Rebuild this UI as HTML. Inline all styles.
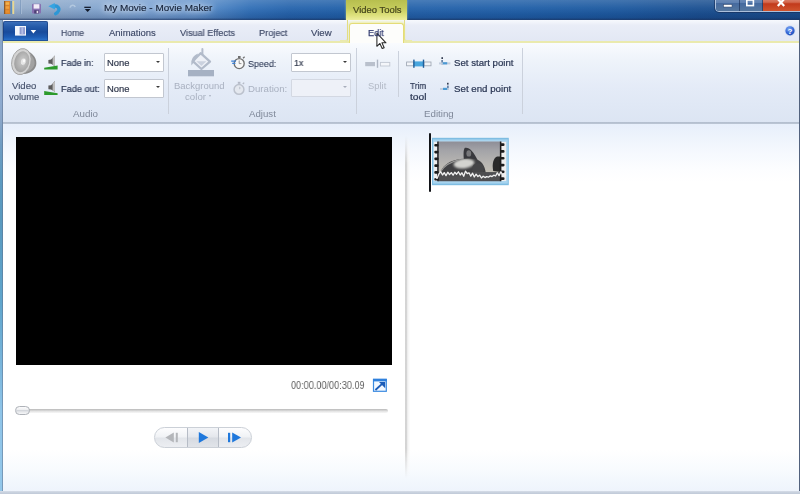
<!DOCTYPE html>
<html lang="en"><head><meta charset="utf-8"><title>My Movie - Movie Maker</title>
<style>
html,body{margin:0;padding:0;background:#fff;}
#win{position:relative;width:800px;height:494px;overflow:hidden;background:#fff;font-family:"Liberation Sans",sans-serif;}
#win div,#win svg{position:absolute;}
.t{will-change:transform;position:absolute;white-space:pre;transform-origin:0 0;display:inline-block;font-family:"Liberation Sans",sans-serif;}
/* title bar */
#title{left:0;top:0;width:800px;height:20px;
 background:
  linear-gradient(180deg,rgba(255,255,255,.16) 0,rgba(255,255,255,.04) 40%,rgba(5,25,70,.10) 70%,rgba(5,25,70,.26) 100%),
  linear-gradient(90deg,#98aec9 0,#8faacb 50px,#84a6cf 100px,#79a1d2 150px,#6493cb 195px,#4a82c2 222px,#3270b7 250px,#2765ad 290px,#2362aa 340px,#2563ab 420px,#2160a8 520px,#1e5aa0 620px,#1c5192 700px,#1b4c8a 800px);}
#titleline{left:0;top:17.5px;width:800px;height:2.5px;background:linear-gradient(180deg,rgba(20,45,90,0),rgba(20,45,90,.45) 60%,rgba(40,60,100,.6));}
#vt{left:346px;top:0;width:61px;height:21px;background:linear-gradient(180deg,#b7bf4e 0,#c5cb5c 40%,#dfe27f 75%,#f0f0a4 100%);box-shadow:0 0 2px rgba(230,235,140,.6);}
/* window buttons */
#wb{left:715px;top:-6px;width:88px;height:16px;border:1px solid rgba(220,230,245,.75);border-radius:0 0 4px 4px;box-shadow:0 0 0 1px rgba(20,40,80,.55);overflow:hidden;}
#wb .b{top:0;height:16px;}
#bmin{left:0;width:23px;background:linear-gradient(180deg,#7e9cc4 0,#5d7fb0 50%,#456a9f 51%,#55779f 100%);border-right:1px solid rgba(20,40,80,.6);}
#bmax{left:24px;width:22px;background:linear-gradient(180deg,#7e9cc4 0,#5d7fb0 50%,#456a9f 51%,#55779f 100%);border-right:1px solid rgba(20,40,80,.6);}
#bclose{left:47px;width:41px;background:linear-gradient(180deg,#e0a090 0,#d4694f 45%,#c23a1c 55%,#d0542e 100%);}
/* tab row */
#tabrow{left:3px;top:20px;width:796px;height:21px;background:linear-gradient(180deg,#f7f9fd 0,#e9edf7 25%,#e3e8f4 100%);}
#yline{left:3px;top:40.5px;width:796px;height:2px;background:#eaeaae;}
#file{left:3px;top:21px;width:45px;height:20px;border-radius:2px 2px 0 0;background:linear-gradient(180deg,#3f73bd 0,#2359a8 30%,#184b9c 55%,#1d5cb4 80%,#2f78d0 100%);box-shadow:inset 0 0 0 1px rgba(20,50,110,.5);}
#edittab{left:348.5px;top:22.5px;width:55px;height:21px;background:#fdfdfb;border:1.5px solid #e4dc78;border-bottom:none;border-radius:3px 3px 0 0;box-sizing:border-box;box-shadow:0 -1px 3px rgba(240,240,150,.9);}
#tl{left:340px;top:20px;width:8px;height:22px;border-right:1.5px solid #e2dc80;border-bottom:2px solid #eaeaae;border-radius:0 0 3px 0;box-sizing:border-box;}
#tr{left:404px;top:20px;width:8px;height:22px;border-left:1.5px solid #e2dc80;border-bottom:2px solid #eaeaae;border-radius:0 0 0 3px;box-sizing:border-box;}
/* ribbon */
#ribbon{left:3px;top:42.5px;width:796px;height:80px;background:linear-gradient(180deg,#f9fbfe 0,#eef3fa 22%,#e4ebf7 55%,#dce5f3 100%);}
#ribline{left:0;top:122.2px;width:800px;height:1.7px;background:linear-gradient(180deg,#b2bdce,#bcc6d5);}
.sep{width:1px;background:#cbd1dc;}
.combo{box-sizing:border-box;border:1px solid #c2c7d0;background:#fff;border-radius:1px;}
.combo.dis{background:#eef1f8;border-color:#d3d8e2;}
.arr{width:0;height:0;border-left:2.4px solid transparent;border-right:2.4px solid transparent;border-top:2.7px solid #3a3a3a;}
/* content */
#content{left:3px;top:124px;width:796px;height:367px;background:linear-gradient(180deg,#e7effb 0,#eef4fc 14px,#f6f9fe 30px,#fcfdff 45px,#ffffff 58px,#ffffff 326px,#f8fbfe 345px,#eef4fc 367px);}
#divider{left:404.8px;top:124px;width:5.5px;height:367px;background:linear-gradient(90deg,#d3d3d3 0,#d5d5d5 1.6px,#ebebeb 2.3px,#f7f7f7 3.6px,rgba(255,255,255,0) 5.5px);-webkit-mask-image:linear-gradient(180deg,transparent 0,transparent 12px,#000 40px,#000 325px,transparent 354px);mask-image:linear-gradient(180deg,transparent 0,transparent 12px,#000 40px,#000 325px,transparent 354px);}
#video{left:16px;top:137px;width:375.5px;height:227.5px;background:#000;}
#bl{left:0;top:20px;width:2.9px;height:474px;background:linear-gradient(90deg,rgba(80,100,130,0) 0,rgba(80,100,130,0) 1.5px,rgba(84,104,134,.55) 2.2px,rgba(110,128,155,.5) 2.9px),linear-gradient(180deg,#86a5c8 0,#8eabd0 80px,#8aa6c8 100px,#6f9cc2 125px,#5d9bc1 160px,#5a9abf 200px,#5fa5cc 280px,#77b4da 340px,#8ec4e8 390px,#93c7ea 474px);}
#br{left:798.8px;top:20px;width:1.2px;height:474px;background:#52627e;}
#bottom{left:0;top:490.8px;width:800px;height:4px;background:linear-gradient(180deg,#d6dde8 0,#c6cfdc 45%,#bcc6d5 100%);}

</style></head>
<body>
<div id="win">
<div id="title"></div>
<div id="titleline"></div>
<div id="vt"></div>
<!-- quick access toolbar -->
<svg id="qat" style="left:0;top:0" width="100" height="20" viewBox="0 0 100 20">
  <rect x="4" y="1" width="6.4" height="13" fill="#d9822b"/>
  <rect x="4" y="1" width="1.2" height="13" fill="#8a5a2a"/>
  <rect x="5.6" y="2.2" width="3.6" height="2.6" fill="#f2b24a"/>
  <rect x="5.6" y="6.2" width="3.6" height="2.6" fill="#f0a03c"/>
  <rect x="5.6" y="10.2" width="3.6" height="2.6" fill="#e8902e"/>
  <rect x="10.4" y="1" width="1.4" height="13" fill="#4f86c0"/>
  <rect x="12.4" y="1" width="1.8" height="13" fill="#e8d890"/>
  <rect x="21" y="0" width="1" height="14" fill="#a9bdd6" opacity=".8"/>
  <rect x="20" y="0" width="1" height="14" fill="#6c8cb4" opacity=".5"/>
  <!-- save -->
  <rect x="32" y="3.8" width="9" height="9.7" rx="1" fill="#8670b0"/>
  <rect x="33.6" y="4.2" width="5.8" height="4.4" fill="#f2ecf8"/>
  <rect x="34.2" y="10.2" width="4.6" height="3.3" fill="#4c3f74"/>
  <rect x="36.6" y="10.8" width="1.6" height="2.4" fill="#e8e0f0"/>
  <!-- undo -->
  <path d="M53.4 6.3 C57.2 5.2 59.800 7.6 58.600 10.6 C58 12 57 13 55.6 13.7" fill="none" stroke="#2d97d6" stroke-width="3.3" stroke-linecap="round"/>
  <path d="M48.4 6.2 L54.8 3 L55 9.4 Z" fill="#35a4e2"/>
  <!-- redo disabled -->
  <path d="M70 7.6 C70.6 4.8 74 4.4 75.2 7" fill="none" stroke="#b9cde2" stroke-width="1.7" opacity=".85"/>
  <!-- customize -->
  <rect x="84.3" y="6.7" width="6.600" height="1.25" fill="#121a2a"/>
  <path d="M84.8 9 L90.5 9 L87.65 12.1 Z" fill="#121a2a"/>
</svg>
<!-- window buttons -->
<div id="wb">
  <div class="b" id="bmin"></div><div class="b" id="bmax"></div><div class="b" id="bclose"></div>
</div>
<svg style="left:715px;top:0" width="85" height="13" viewBox="0 0 85 13">
  <rect x="8.6" y="4.6" width="8.4" height="2.4" fill="#fff" stroke="#3a4a68" stroke-width=".5"/>
  <rect x="31.8" y="0" width="6.6" height="5.6" fill="none" stroke="#fff" stroke-width="1.6"/>
  <path d="M62.8 -1 L69.2 6 M69.2 -1 L62.8 6" stroke="#fff" stroke-width="2.2" fill="none"/>
</svg>
<!-- tab row -->
<div id="tabrow"></div>
<div id="yline"></div>
<div id="tl"></div><div id="tr"></div>
<div id="file"></div>
<svg style="left:3px;top:21px" width="45" height="20" viewBox="0 0 45 20">
  <rect x="12" y="5" width="11" height="9.6" fill="#f4f7fc"/>
  <rect x="16.6" y="6.200" width="5.4" height="7.2" fill="#8f9bd0"/>
  <rect x="18.4" y="6.2" width="1.8" height="7.2" fill="#b4bee6"/>
  <path d="M27.6 9 L33.2 9 L30.4 12.4 Z" fill="#fff"/>
</svg>
<div id="edittab"></div>
<!-- help -->
<svg style="left:783px;top:24px" width="14" height="14" viewBox="0 0 14 14">
  <defs><radialGradient id="hg" cx=".4" cy=".3" r=".8"><stop offset="0" stop-color="#7aa6f4"/><stop offset=".6" stop-color="#3264d4"/><stop offset="1" stop-color="#2048a8"/></radialGradient></defs>
  <circle cx="7" cy="6.8" r="5.5" fill="#cfdcf4" opacity=".8"/><circle cx="7" cy="6.8" r="4.6" fill="url(#hg)"/>
  <text x="7" y="9.7" font-family="Liberation Sans, sans-serif" font-size="8" font-weight="bold" fill="#fff" text-anchor="middle">?</text>
</svg>
<!-- ribbon -->
<div id="ribbon"></div>
<div id="ribline"></div>
<div class="sep" style="left:168px;top:48px;height:66px"></div>
<div class="sep" style="left:356px;top:48px;height:66px"></div>
<div class="sep" style="left:397.5px;top:51px;height:46px"></div>
<div class="sep" style="left:521.5px;top:48px;height:66px"></div>
<div class="combo" style="left:104px;top:52.7px;width:59.6px;height:19.2px"></div>
<div class="combo" style="left:104px;top:78.6px;width:59.6px;height:19px"></div>
<div class="combo" style="left:291.2px;top:52.9px;width:59.6px;height:19px"></div>
<div class="combo dis" style="left:291.2px;top:78.6px;width:59.6px;height:18.6px"></div>
<div class="arr" style="left:155.6px;top:60.8px"></div>
<div class="arr" style="left:155.6px;top:86.4px"></div>
<div class="arr" style="left:342.8px;top:60.8px"></div>
<div class="arr" style="left:342.8px;top:86.4px;border-top-color:#a8aebb"></div>
<div class="arr" style="left:208.6px;top:95.4px;border-top-color:#a9b1c0;border-left-width:1.8px;border-right-width:1.8px;border-top-width:2px"></div>
<svg id="ricons" style="left:0;top:43px" width="530" height="80" viewBox="0 43 530 80">
  <defs>
    <radialGradient id="spk" cx=".55" cy=".45" r=".65"><stop offset="0" stop-color="#cfcfcf"/><stop offset=".5" stop-color="#b4b4b4"/><stop offset="1" stop-color="#9a9a9a"/></radialGradient>
  </defs>
  <!-- big speaker -->
  <g transform="rotate(14 21.4 61.6)">
    <path d="M24 49.4 C31 50.6 36.6 55.6 36.6 61.6 C36.6 67.6 31 72.6 24 73.8 Z" fill="#8b8b8b"/>
    <path d="M26 51.6 C31 53 34.8 57 34.8 61.6 C34.800 66.2 31 70.2 26 71.6 Z" fill="#a2a2a2"/>
    <ellipse cx="21.4" cy="61.6" rx="9.6" ry="13.2" fill="#d4d4d4" stroke="#a3a3a3" stroke-width=".9"/>
    <ellipse cx="21.8" cy="61.6" rx="7.4" ry="10.6" fill="url(#spk)"/>
    <ellipse cx="23.2" cy="61.2" rx="2.9" ry="3.8" fill="#e6e6e6" stroke="#a8a8a8" stroke-width=".5"/>
    <ellipse cx="23.8" cy="60.2" rx="1.2" ry="1.6" fill="#fafafa"/>
  </g>
  <!-- fade in -->
  <g>
    <path d="M48.4 60 L51 59.6 L55 55.400 L55 66.2 L51 63.8 L48.4 63.6 Z" fill="#5c5c5c"/>
    <path d="M52.6 57.800 L55 55.400 L55 66.2 L52.6 64.800 Z" fill="#bdbdbd"/>
    <path d="M44.2 67.8 L57.6 65.4 L57.6 69.5 L44.2 69.5 Z" fill="#2c9a2c"/>
  </g>
  <g transform="translate(0 25.6)">
    <path d="M48.4 60 L51 59.6 L55 55.400 L55 66.2 L51 63.8 L48.4 63.6 Z" fill="#5c5c5c"/>
    <path d="M52.6 57.800 L55 55.400 L55 66.2 L52.6 64.800 Z" fill="#bdbdbd"/>
    <path d="M44.2 65.4 L57.6 67.6 L57.6 69.5 L44.2 69.5 Z" fill="#2c9a2c"/>
  </g>
  <!-- background color (disabled) -->
  <path d="M202.4 49 L202.4 54.6" stroke="#b4bccb" stroke-width="2" fill="none" stroke-linecap="round"/>
  <path d="M200.6 53.2 L210 61.6 L201.4 69 L192.8 61.2 Z" fill="#eef1f7" stroke="#b2bbca" stroke-width="2.3" stroke-linejoin="round"/>
  <path d="M198.200 53.6 C193.4 55.2 190.600 59.6 191.4 65.6 L195.2 60.2 Z" fill="#b2bbca"/>
  <path d="M196.4 61.2 L206.4 61.2 L201.4 66 Z" fill="#cbd2df"/>
  <rect x="188" y="70" width="26" height="6.3" fill="#a6b1c3"/>
  <!-- speed -->
  <circle cx="239.2" cy="63.6" r="5" fill="#f8f8f8" stroke="#707070" stroke-width="1.35"/>
  <rect x="238" y="56" width="2.6" height="2" fill="#707070"/>
  <path d="M243 58.2 L244.6 56.8" stroke="#707070" stroke-width="1.3"/>
  <path d="M239.2 63.6 L239.2 60.4 M239.2 63.6 L241.4 63.6" stroke="#777" stroke-width=".8"/>
  <path d="M231.2 61.2 L236 61.2 M232.2 63.4 L235.4 63.4" stroke="#3b7fd4" stroke-width="1.2"/>
  <!-- duration (disabled) -->
  <circle cx="239" cy="89.4" r="4.9" fill="#e4e8ef" stroke="#bcc2cd" stroke-width="1.5"/>
  <rect x="237.8" y="81.8" width="2.6" height="2" fill="#b4bac6"/>
  <path d="M242.8 84 L244.2 82.6" stroke="#b4bac6" stroke-width="1.3"/>
  <path d="M239 89.4 L239 86.4 L241 88 Z" fill="#c2c7d2"/>
  <!-- split (disabled) -->
  <rect x="365.2" y="62" width="9.8" height="4.2" fill="#b9c0cc"/>
  <rect x="376.8" y="59.6" width="1.4" height="8.2" fill="#aeb6c3"/>
  <rect x="380.4" y="62.4" width="9.4" height="3.6" fill="#f4f6fa" stroke="#c1c7d2" stroke-width=".9"/>
  <!-- trim -->
  <rect x="406.6" y="62" width="7" height="3.8" fill="#f2f4f8" stroke="#9aa2b0" stroke-width=".8"/>
  <rect x="424" y="62" width="7" height="3.8" fill="#f2f4f8" stroke="#9aa2b0" stroke-width=".8"/>
  <rect x="414" y="61.4" width="9.6" height="5" fill="#49a6de"/>
  <rect x="413.2" y="59.6" width="1.4" height="8.2" fill="#1f5f9c"/>
  <rect x="422.8" y="59.6" width="1.4" height="8.2" fill="#1f5f9c"/>
  <!-- set start -->
  <rect x="441.4" y="57.2" width="1.6" height="1.8" fill="#333c50"/>
  <rect x="441.4" y="60" width="1.4" height="4.4" fill="#4a6a94"/>
  <rect x="439" y="62.4" width="11.4" height="2" fill="#c3cedd"/>
  <rect x="442.8" y="62.2" width="4.4" height="2.2" fill="#4b9ad4"/>
  <!-- set end -->
  <rect x="447" y="82.8" width="1.6" height="1.8" fill="#333c50"/>
  <rect x="447.2" y="85.6" width="1.4" height="4.4" fill="#4a6a94"/>
  <rect x="440" y="88" width="9" height="2" fill="#c3cedd"/>
  <rect x="443" y="87.8" width="4.2" height="2.2" fill="#4b9ad4"/>
</svg>
<!-- content -->
<div id="content"></div>
<div id="divider"></div>
<div id="video"></div>
<!-- fullscreen icon -->
<svg style="left:372px;top:378px" width="16" height="15" viewBox="372 378 16 15">
  <rect x="373.5" y="379.4" width="12.800" height="11.9" fill="#f2f8ff" stroke="#3a8ae0" stroke-width="1.2"/>
  <rect x="373" y="378.8" width="13.8" height="2.600" fill="#2f80dc"/>
  <path d="M375.4 390 L382.4 383.6" stroke="#1c5cb8" stroke-width="1.9" fill="none"/>
  <path d="M379 382 L385.2 382 L385.2 388.2 Z" fill="#1c5cb8"/>
</svg>
<!-- seek bar -->
<div style="left:22px;top:408.6px;width:366px;height:4px;border-radius:2px;background:linear-gradient(180deg,#b9b9b9 0,#d2d2d2 35%,#ececec 70%,#f6f6f6 100%)"></div>
<div style="left:15.2px;top:406.1px;width:14.7px;height:8.8px;border-radius:4.4px;box-sizing:border-box;border:1.3px solid #aeb2b8;background:linear-gradient(180deg,#fbfbfc 0,#f0f1f3 35%,#d4d7dc 50%,#e6e8eb 70%,#f6f6f8 100%)"></div>
<!-- transport -->
<div style="left:154px;top:427.2px;width:98px;height:20.8px;border-radius:10.4px;box-sizing:border-box;border:1px solid #cbd0d7;background:linear-gradient(180deg,#fdfdfe 0,#f0f2f5 48%,#e2e5ea 52%,#eceef2 100%);overflow:hidden">
  <div style="left:32.4px;top:-1px;width:31.6px;height:21px;box-sizing:border-box;border-left:1px solid #b6bcc6;border-right:1px solid #b6bcc6;background:linear-gradient(180deg,#f4f6f9 0,#e4e7ec 48%,#d6dae1 52%,#e2e5ea 100%)"></div>
</div>
<svg style="left:154px;top:427px" width="98" height="21" viewBox="154 427 98 21">
  <path d="M173.8 432.6 L173.8 442.4 L165.4 437.5 Z" fill="#b4b6ba"/>
  <rect x="175.8" y="432.8" width="2" height="9.4" fill="#b4b6ba"/>
  <path d="M198.8 432 L198.8 443 L208.4 437.5 Z" fill="#1f78dc"/>
  <rect x="228" y="432.8" width="2.2" height="9.4" fill="#1f78dc"/>
  <path d="M232.2 432.6 L232.2 442.4 L241 437.5 Z" fill="#1f78dc"/>
</svg>
<!-- storyboard clip -->
<div style="left:428.9px;top:132.5px;width:2.1px;height:59.5px;background:#121418;border-radius:1px"></div>
<svg style="left:430px;top:135px" width="82" height="54" viewBox="430 135 82 54">
  <defs>
    <linearGradient id="sky" x1="0" y1="0" x2="0" y2="1"><stop offset="0" stop-color="#8a8a94"/><stop offset=".25" stop-color="#a4a4a8"/><stop offset=".55" stop-color="#b8b6b2"/><stop offset=".74" stop-color="#c2beb4"/><stop offset=".78" stop-color="#6a6a6a"/><stop offset="1" stop-color="#4e4e50"/></linearGradient>
    <filter id="bl1" x="-5%" y="-5%" width="110%" height="110%"><feGaussianBlur stdDeviation=".55"/></filter>
    <filter id="bl3" x="-20%" y="-20%" width="140%" height="140%"><feGaussianBlur stdDeviation="1.1"/></filter>
    <filter id="bl2" x="-5%" y="-5%" width="110%" height="110%"><feGaussianBlur stdDeviation=".35"/></filter>
    <clipPath id="pic"><rect x="433.6" y="141.6" width="72.8" height="39.6"/></clipPath>
    <clipPath id="bodyc"><path d="M439.5 177 C440 169 445.5 163.4 453 160.8 C460 158.6 470 157.8 477 159.6 C482.5 161.6 485.6 167 486.2 177 Z"/></clipPath>
  </defs>
  <rect x="432" y="137.8" width="76.8" height="47.4" fill="#7fbde2"/>
  <rect x="433" y="139.4" width="74.800" height="44.2" fill="#a8d4ef"/>
  <g clip-path="url(#pic)">
    <rect x="433.6" y="141.6" width="72.8" height="39.6" fill="#eeeeee"/>
    <g filter="url(#bl1)">
      <rect x="438.3" y="140" width="62" height="43" fill="url(#sky)"/>
      <!-- head -->
      <path d="M463.8 159 C463.4 153 463.6 149 465 147.800 C469 147 473.6 151 477.8 160.6 C473 159.4 468 159 463.8 159 Z" fill="#38383c"/>
      <ellipse cx="468.8" cy="153.4" rx="2.4" ry="3.2" fill="#77777a" filter="url(#bl2)"/>
      <!-- body -->
      <g clip-path="url(#bodyc)">
        <rect x="438" y="156" width="50" height="22" fill="#404042"/>
        <ellipse cx="464" cy="163.600" rx="10.5" ry="4.8" fill="#d4d4d0" transform="rotate(-7 464 163.6)" filter="url(#bl3)"/>
        <path d="M441 171 C445 164.600 452 161.400 460 159.6" stroke="#9a9a98" stroke-width="1.4" fill="none" filter="url(#bl2)"/>
        <ellipse cx="478" cy="169" rx="6" ry="6" fill="#444446" filter="url(#bl2)"/>
      </g>
      <!-- right seal -->
      <path d="M493.2 171 C491.8 164 493.4 157.6 497.4 156.6 C499.2 156.200 500.2 156.4 500.6 156.8 L500.6 172 Z" fill="#29292b"/>
      <rect x="438.3" y="172" width="62" height="9.4" fill="#4e4e50" opacity=".92"/>
    </g>
    <g fill="#1c1c1e" filter="url(#bl2)">
      <rect x="437.2" y="141" width="1.5" height="41"/><rect x="499.9" y="141" width="1.5" height="41"/>
      <rect x="434.3" y="143.9" width="4.2" height="2.7" rx="1.1"/><rect x="434.3" y="150.7" width="4.2" height="2.7" rx="1.1"/><rect x="434.3" y="157.5" width="4.2" height="2.7" rx="1.1"/><rect x="434.3" y="164.3" width="4.2" height="2.7" rx="1.1"/><rect x="434.3" y="171.1" width="4.2" height="2.7" rx="1.1"/><rect x="434.3" y="177.9" width="4.2" height="2.7" rx="1.1"/><rect x="500.2" y="143.3" width="4.3" height="2.7" rx="1.1"/><rect x="500.2" y="150.1" width="4.3" height="2.7" rx="1.1"/><rect x="500.2" y="156.9" width="4.3" height="2.7" rx="1.1"/><rect x="500.2" y="163.7" width="4.3" height="2.7" rx="1.1"/><rect x="500.2" y="170.5" width="4.3" height="2.7" rx="1.1"/><rect x="500.2" y="177.3" width="4.3" height="2.7" rx="1.1"/>
    </g>
    <polyline filter="url(#bl2)" fill="none" stroke="#f0f0f0" stroke-width="1.3" stroke-linejoin="round" points="433.6,176.5 435.4,177.2 437.1,178.4 438.9,174 440.7,171.6 442.5,175 444.2,172.6 446.0,175.6 447.8,172.2 449.5,174.6 451.3,172.6 453.1,175.2 454.8,172.2 456.6,174.2 458.4,171.8 460.2,175 461.9,172.8 463.7,176.2 465.5,171.2 467.2,173.6 469.0,172.8 470.8,176.2 472.6,173.2 474.3,177 476.1,174.2 477.9,176.6 479.6,175.2 481.4,178 483.2,176.2 485.0,177.6 486.7,176.6 488.5,177.2 490.3,175.8 492.0,176.6 493.8,175.2 495.6,176 497.3,172.8 499.1,175.6 500.9,171.8 502.7,175 504.4,173.6 506.2,176"/>
  </g>
</svg>
<!-- mouse cursor -->
<svg style="left:374px;top:31px" width="16" height="20" viewBox="374 31 16 20">
  <path transform="translate(376.9 33.2) scale(.79)" d="M0 0 L0 16.6 L3.800 13 L6.700 19.4 L9.2 18.300 L6.4 12.1 L11.5 12.1 Z" fill="#fff" stroke="#2a2a2a" stroke-width="1.35" stroke-linejoin="round"/>
</svg>
<!-- window borders -->
<div id="bl"></div><div id="br"></div><div id="bottom"></div>

<span class="t" style="left:103.60px;top:3.04px;font-size:9.4px;line-height:9.4px;color:#152238;transform:scaleX(1.0616);text-shadow:0 0 5px rgba(255,255,255,.9),0 0 8px rgba(255,255,255,.7),0 0 12px rgba(255,255,255,.5);-webkit-text-stroke:.15px;">My Movie - Movie Maker</span>
<span class="t" style="left:352.50px;top:5.14px;font-size:9.4px;line-height:9.4px;color:#47471c;transform:scaleX(1.0075);-webkit-text-stroke:.22px;">Video Tools</span>
<span class="t" style="left:60.60px;top:28.14px;font-size:9.4px;line-height:9.4px;color:#3d4866;transform:scaleX(0.9254);-webkit-text-stroke:.15px;">Home</span>
<span class="t" style="left:108.75px;top:28.14px;font-size:9.4px;line-height:9.4px;color:#3d4866;transform:scaleX(1.0099);-webkit-text-stroke:.15px;">Animations</span>
<span class="t" style="left:180.00px;top:28.14px;font-size:9.4px;line-height:9.4px;color:#3d4866;transform:scaleX(0.9740);-webkit-text-stroke:.15px;">Visual Effects</span>
<span class="t" style="left:258.75px;top:28.14px;font-size:9.4px;line-height:9.4px;color:#3d4866;transform:scaleX(0.9764);-webkit-text-stroke:.15px;">Project</span>
<span class="t" style="left:311.25px;top:28.14px;font-size:9.4px;line-height:9.4px;color:#3d4866;transform:scaleX(1.0245);-webkit-text-stroke:.15px;">View</span>
<span class="t" style="left:368.00px;top:28.29px;font-size:9.4px;line-height:9.4px;color:#343e72;transform:scaleX(0.9749);-webkit-text-stroke:.25px;">Edit</span>
<span class="t" style="left:11.90px;top:81.29px;font-size:9.4px;line-height:9.4px;color:#46526c;transform:scaleX(1.0226);-webkit-text-stroke:.15px;">Video</span>
<span class="t" style="left:8.75px;top:91.94px;font-size:9.4px;line-height:9.4px;color:#46526c;transform:scaleX(1.0005);-webkit-text-stroke:.15px;">volume</span>
<span class="t" style="left:61.25px;top:58.29px;font-size:9.4px;line-height:9.4px;color:#2c3855;transform:scaleX(0.9594);-webkit-text-stroke:.22px;">Fade in:</span>
<span class="t" style="left:61.25px;top:83.79px;font-size:9.4px;line-height:9.4px;color:#2c3855;transform:scaleX(0.9779);-webkit-text-stroke:.22px;">Fade out:</span>
<span class="t" style="left:106.90px;top:58.29px;font-size:9.4px;line-height:9.4px;color:#30384c;transform:scaleX(1.0035);-webkit-text-stroke:.2px;">None</span>
<span class="t" style="left:106.90px;top:83.79px;font-size:9.4px;line-height:9.4px;color:#30384c;transform:scaleX(1.0035);-webkit-text-stroke:.2px;">None</span>
<span class="t" style="left:173.75px;top:81.29px;font-size:9.4px;line-height:9.4px;color:#a9b1c0;transform:scaleX(1.0121);">Background</span>
<span class="t" style="left:185.00px;top:91.94px;font-size:9.4px;line-height:9.4px;color:#a9b1c0;transform:scaleX(1.0331);">color</span>
<span class="t" style="left:248.00px;top:58.54px;font-size:9.4px;line-height:9.4px;color:#2c3855;transform:scaleX(0.9506);-webkit-text-stroke:.1px;">Speed:</span>
<span class="t" style="left:293.75px;top:58.29px;font-size:9.4px;line-height:9.4px;color:#30384c;transform:scaleX(0.9338);-webkit-text-stroke:.2px;">1x</span>
<span class="t" style="left:248.00px;top:83.79px;font-size:9.4px;line-height:9.4px;color:#a9b1c0;transform:scaleX(1.0316);">Duration:</span>
<span class="t" style="left:368.00px;top:81.29px;font-size:9.4px;line-height:9.4px;color:#b3bac6;transform:scaleX(1.0000);">Split</span>
<span class="t" style="left:410.00px;top:81.29px;font-size:9.4px;line-height:9.4px;color:#2c3855;transform:scaleX(0.8829);-webkit-text-stroke:.22px;">Trim</span>
<span class="t" style="left:410.00px;top:91.94px;font-size:9.4px;line-height:9.4px;color:#2c3855;transform:scaleX(1.0909);-webkit-text-stroke:.22px;">tool</span>
<span class="t" style="left:454.00px;top:58.29px;font-size:9.4px;line-height:9.4px;color:#2c3855;transform:scaleX(1.0286);-webkit-text-stroke:.22px;">Set start point</span>
<span class="t" style="left:454.00px;top:83.79px;font-size:9.4px;line-height:9.4px;color:#2c3855;transform:scaleX(1.0359);-webkit-text-stroke:.22px;">Set end point</span>
<span class="t" style="left:73.10px;top:110.13px;font-size:9.0px;line-height:9.0px;color:#7f8899;transform:scaleX(1.0855);">Audio</span>
<span class="t" style="left:248.75px;top:110.13px;font-size:9.0px;line-height:9.0px;color:#7f8899;transform:scaleX(1.0733);">Adjust</span>
<span class="t" style="left:423.75px;top:110.13px;font-size:9.0px;line-height:9.0px;color:#7f8899;transform:scaleX(1.0806);">Editing</span>
<span class="t" style="left:290.60px;top:379.59px;font-size:11px;line-height:11px;color:#5e5e5e;transform:scaleX(0.8297);">00:00.00/00:30.09</span>
</div>
</body></html>
